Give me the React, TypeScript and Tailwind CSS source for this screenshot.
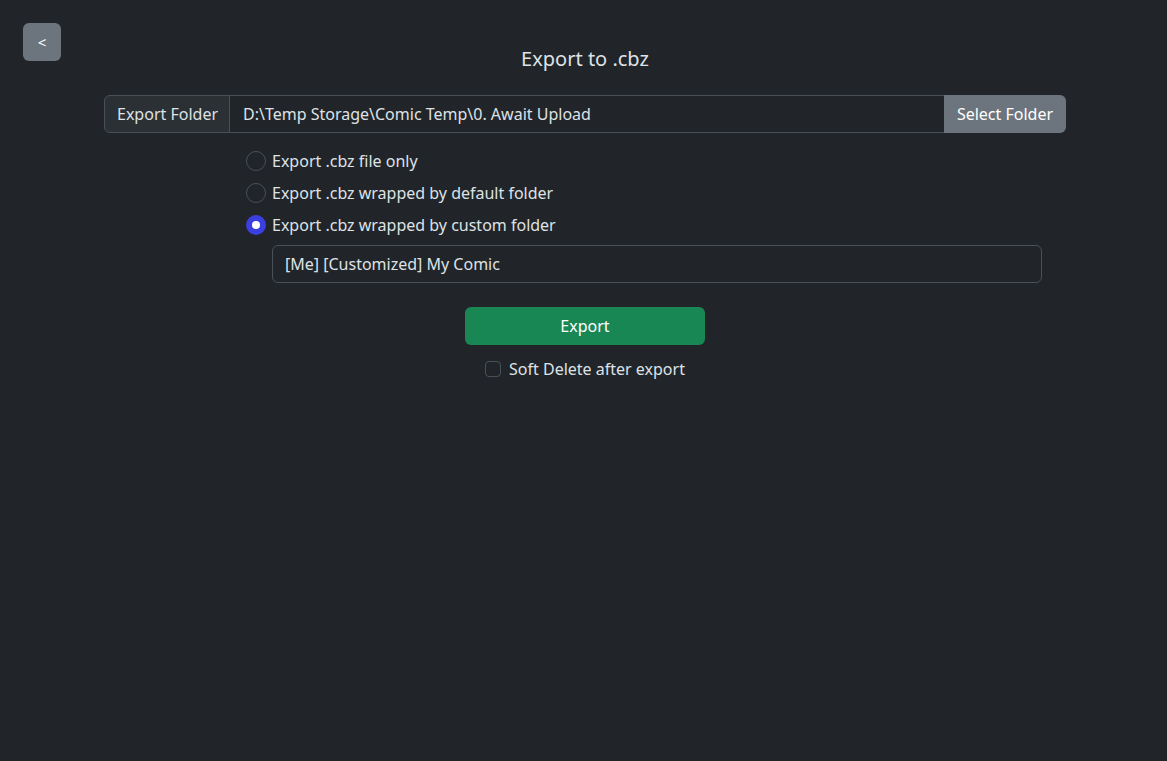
import React, { useState } from 'react';

const options = [
  'Export .cbz file only',
  'Export .cbz wrapped by default folder',
  'Export .cbz wrapped by custom folder',
];

export default function App() {
  const [mode, setMode] = useState(2);
  const [softDelete, setSoftDelete] = useState(false);

  return (
    <div
      className="min-h-[761px] w-full bg-[#212529] text-[#dee2e6] text-[16px] leading-[24px]"
      style={{ fontFamily: '"Segoe UI", "Noto Sans", sans-serif' }}
    >
      <div className="pt-[23px] pl-[23px]">
        <button className="w-[38px] h-[38px] rounded-[6px] bg-[#6c757d] text-white text-[15px] flex items-center justify-center">
          &lt;
        </button>
      </div>

      <h1 className="-mt-[17px] text-center text-[20px] leading-[30px] font-normal pl-[3px]">Export to .cbz</h1>

      <div className="ml-[104px] w-[962px] mt-[21px]">
        <div className="flex h-[38px]">
          <span className="shrink-0 whitespace-nowrap flex items-center px-[12px] bg-[#2b3035] border border-[#495057] rounded-l-[6px] w-[126px]">
            Export Folder
          </span>
          <div className="flex-1 whitespace-nowrap flex items-center px-[13px] border-y border-[#495057] bg-[#212529]">
            D:\Temp Storage\Comic Temp\0. Await Upload
          </div>
          <button className="shrink-0 whitespace-nowrap w-[122px] bg-[#6c757d] text-white rounded-r-[6px] flex items-center justify-center">
            Select Folder
          </button>
        </div>

        <div className="ml-[142px] mt-[16px] flex flex-col gap-[8px]">
          {options.map((label, i) => (
            <label key={label} className="flex items-center gap-[6px] h-[24px] cursor-pointer" onClick={() => setMode(i)}>
              <span
                className={
                  i === mode
                    ? 'w-[20px] h-[20px] rounded-full bg-[#3b3fe0] flex items-center justify-center'
                    : 'w-[20px] h-[20px] rounded-full border border-[#495057]'
                }
              >
                {i === mode && <span className="w-[8px] h-[8px] rounded-full bg-white" />}
              </span>
              {label}
            </label>
          ))}
          <div className="ml-[26px] w-[770px] h-[38px] border border-[#495057] rounded-[6px] flex items-center px-[12px]">
            [Me] [Customized] My Comic
          </div>
        </div>
      </div>

      <div className="mt-[24px] flex flex-col items-center pl-[3px]">
        <button className="w-[240px] h-[38px] rounded-[6px] bg-[#198754] text-white">Export</button>
        <label className="mt-[12px] flex items-center gap-[8px] cursor-pointer" onClick={() => setSoftDelete(!softDelete)}>
          <span className="w-[16px] h-[16px] rounded-[4px] border border-[#495057]" />
          Soft Delete after export
        </label>
      </div>
    </div>
  );
}
